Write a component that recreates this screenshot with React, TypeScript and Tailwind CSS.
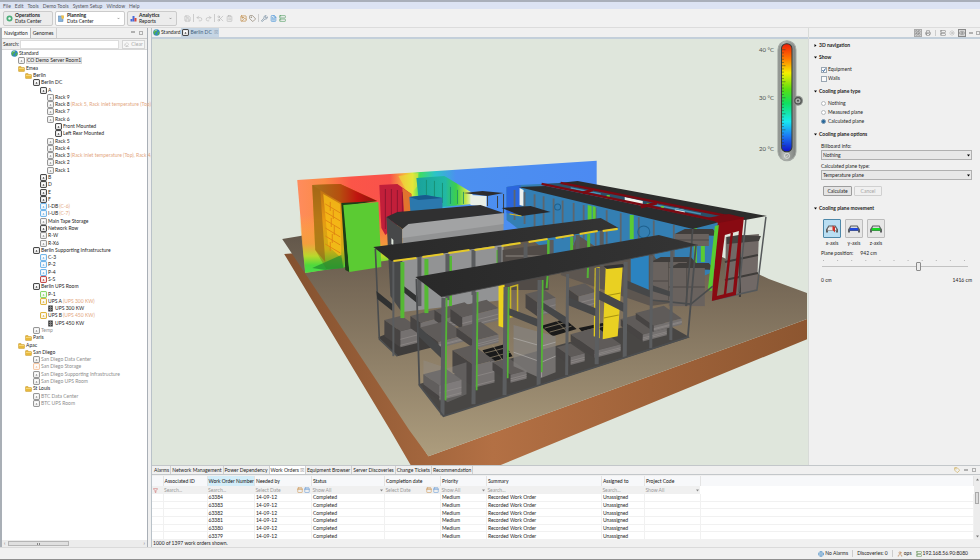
import React from "react";
import {
  Save, Undo2, Redo2, Scissors, ClipboardList, Image, Tag, Wrench, FileText, Server,
  ChevronDown, Globe, Printer, Sun, Eye, LayoutGrid, Eraser, User, Calendar, Filter,
} from "lucide-react";

type Row = { l: number; icon: string; text: string; note?: string; dim?: boolean; sel?: boolean };

const TREE: Row[] = [
  { l: 0, icon: "globe", text: "Standard" },
  { l: 1, icon: "rack", text: "CO Demo Server Room1", sel: true },
  { l: 1, icon: "folder", text: "Emea" },
  { l: 2, icon: "folder", text: "Berlin" },
  { l: 3, icon: "dark", text: "Berlin DC" },
  { l: 4, icon: "dark", text: "A" },
  { l: 5, icon: "rack", text: "Rack 9" },
  { l: 5, icon: "rack", text: "Rack 8", note: "(Rack 5, Rack inlet temperature (Top)," },
  { l: 5, icon: "rack", text: "Rack 7" },
  { l: 5, icon: "rack", text: "Rack 6" },
  { l: 6, icon: "dark", text: "Front Mounted" },
  { l: 6, icon: "dark", text: "Left Rear Mounted" },
  { l: 5, icon: "rack", text: "Rack 5" },
  { l: 5, icon: "rack", text: "Rack 4" },
  { l: 5, icon: "rack", text: "Rack 3", note: "(Rack inlet temperature (Top), Rack 4," },
  { l: 5, icon: "rack", text: "Rack 2" },
  { l: 5, icon: "rack", text: "Rack 1" },
  { l: 4, icon: "dark", text: "B" },
  { l: 4, icon: "dark", text: "D" },
  { l: 4, icon: "dark", text: "E" },
  { l: 4, icon: "dark", text: "F" },
  { l: 4, icon: "blue", text: "I-DB", note: "(C-6)" },
  { l: 4, icon: "blue", text: "I-UB", note: "(C-7)" },
  { l: 4, icon: "rack", text: "Main Tape Storage" },
  { l: 4, icon: "dark", text: "Network Row" },
  { l: 4, icon: "rack", text: "R-W" },
  { l: 4, icon: "rack", text: "R-X6" },
  { l: 3, icon: "dark", text: "Berlin Supporting Infrastructure" },
  { l: 4, icon: "blue", text: "C-3" },
  { l: 4, icon: "blue", text: "P-2" },
  { l: 4, icon: "blue", text: "P-4" },
  { l: 4, icon: "red", text: "S-S" },
  { l: 3, icon: "dark", text: "Berlin UPS Room" },
  { l: 4, icon: "green", text: "P-1" },
  { l: 4, icon: "yellow", text: "UPS A", note: "(UPS 300 KW)" },
  { l: 5, icon: "ups", text: "UPS 300 KW" },
  { l: 4, icon: "yellow", text: "UPS B", note: "(UPS 450 KW)" },
  { l: 5, icon: "ups", text: "UPS 450 KW" },
  { l: 3, icon: "rack", text: "Temp", dim: true },
  { l: 2, icon: "folder", text: "Paris" },
  { l: 1, icon: "folder", text: "Apac" },
  { l: 2, icon: "folder", text: "San Diego" },
  { l: 3, icon: "rack", text: "San Diego Data Center", dim: true },
  { l: 3, icon: "orange", text: "San Diego Storage", dim: true },
  { l: 3, icon: "rack", text: "San Diego Supporting Infrastructure", dim: true },
  { l: 3, icon: "rack", text: "San Diego UPS Room", dim: true },
  { l: 2, icon: "folder", text: "St Louis" },
  { l: 3, icon: "rack", text: "BTC Data Center", dim: true },
  { l: 3, icon: "rack", text: "BTC UPS Room", dim: true },
];

const INDENT = ["pl-[9px]", "pl-[16px]", "pl-[23px]", "pl-[31px]", "pl-[38px]", "pl-[45px]", "pl-[53px]"];

const BOX: Record<string, string> = {
  rack: "#858585", dark: "#2b2b2b", blue: "#5aaae6", red: "#b92a2a", green: "#74cf50", yellow: "#d9a61e", orange: "#f3bd95",
};

function GlobeIcon() {
  return (
    <svg viewBox="0 0 14 14" className="size-[7px] shrink-0">
      <circle cx="7" cy="7" r="6.5" fill="#3286c4" />
      <path d="M2 4 Q6 0 9 2 L7 6 L4 8 L5 12 Q1 11 1 7Z M9 7l4-2 q1 5-4 8z" fill="#52b04a" />
      <path d="M3 4 Q5 2 8 2" stroke="#d9f1ff" strokeWidth="1.2" fill="none" />
    </svg>
  );
}

function NodeIcon({ kind }: { kind: string }) {
  if (kind === "globe") return <GlobeIcon />;
  if (kind === "folder")
    return (
      <svg viewBox="0 0 14 14" className="size-[7px] shrink-0">
        <path d="M1 4q0-1 1-1h4l1 2h5q1 0 1 1v6q0 1-1 1H2q-1 0-1-1z" fill="#e8b93c" stroke="#bd8a1b" strokeWidth="0.8" />
        <path d="M2 7h10" stroke="#fbe08c" strokeWidth="1.5" />
      </svg>
    );
  if (kind === "ups")
    return (
      <svg viewBox="0 0 14 14" className="size-[7px] shrink-0">
        <rect x="2.5" y="1" width="9" height="12" fill="#3d3d3d" />
        <path d="M7 2v10M4 5h2M8 5h2M4 9h2M8 9h2" stroke="#c4c4c4" />
      </svg>
    );
  return (
    <svg viewBox="0 0 14 14" className="size-[7px] shrink-0">
      <rect x="1.2" y="1.2" width="11.6" height="11.6" rx="1" fill="#fdfdfd" stroke={BOX[kind]} strokeWidth="1.9" />
      <path d="M5 8.500h4M7 6v3" stroke={BOX[kind]} strokeWidth="1.2" />
    </svg>
  );
}

/* ---------- top ---------- */

function MenuBar() {
  const items = ["File", "Edit", "Tools", "Demo Tools", "System Setup", "Window", "Help"];
  return (
    <nav className="flex h-[9px] shrink-0 items-center gap-1 border-t-2 border-[#a9afba] bg-[#dce3f3] pl-[3px] text-[#55585f]">
      {items.map((m) => (
        <button key={m} className="h-[6px] leading-[6px]">{m}</button>
      ))}
    </nav>
  );
}

function Perspective({ title, sub, icon, cls, caret }: { title: string; sub: string; icon: React.ReactNode; cls: string; caret?: boolean }) {
  return (
    <button className={"flex h-[15px] items-center gap-[2px] rounded-[2px] border border-[#cbcbcb] pl-[2px] pr-1 text-left " + cls}>
      {icon}
      <span className="flex-1 leading-[6px]">
        <b className="block">{title}</b>
        <span className="block">{sub}</span>
      </span>
      {caret && <ChevronDown className="size-[3px] text-[#555]" strokeWidth={4} />}
    </button>
  );
}

function Toolbar() {
  const ic = "size-[7px]";
  return (
    <div className="flex h-[19px] shrink-0 items-center gap-[2px] border-b border-[#dcdcdc] bg-[#f1f1f1] pl-[3px]">
      <Perspective title="Operations" sub="Data Center" cls="w-[50px] bg-[#ececec]" icon={
        <svg viewBox="0 0 14 14" className="size-[7px]"><circle cx="7" cy="7" r="6" fill="#4cae79" /><circle cx="7" cy="7" r="2.5" fill="#eefbf3" /></svg>} />
      <Perspective title="Planning" sub="Data Center" caret cls="w-[70px] bg-white" icon={
        <svg viewBox="0 0 14 14" className="size-[7px]"><rect x="1" y="2" width="9" height="11" fill="#88b3dc" stroke="#4f7fab" /><path d="M6 1h6v5L8 9z" fill="#f2c14b" /></svg>} />
      <Perspective title="Analytics" sub="Reports" caret cls="w-[50px] bg-[#ececec]" icon={
        <svg viewBox="0 0 14 14" className="size-[7px]"><path d="M1 8h4v5H1z" fill="#4668d8" /><path d="M5 2h4v11H5z" fill="#4668d8" /><path d="M9 6h4v7H9z" fill="#d8483c" /></svg>} />
      <div className="ml-[5px] flex items-center gap-[2px] text-[#b5b5b5]">
        <Save className={ic} />
        <i className="h-2 w-px bg-[#ccc]" />
        <Undo2 className={ic} /><Redo2 className={ic} />
        <i className="h-2 w-px bg-[#ccc]" />
        <Scissors className={ic} /><ClipboardList className={ic} />
        <i className="h-2 w-[3px]" />
        <Image className={ic + " text-[#b97a2a]"} /><Tag className={ic + " text-[#7b6a55]"} />
        <i className="h-2 w-px bg-[#ccc]" />
        <Wrench className={ic + " text-[#5c7890]"} /><FileText className={ic + " text-[#2f86d6]"} /><Server className={ic + " text-[#4a9a5c]"} />
      </div>
    </div>
  );
}

function WinButtons() {
  return (
    <span className="ml-auto flex items-start gap-1 pr-1">
      <i className="h-[2px] w-1 border border-[#b0b0b0]" />
      <i className="size-1 border border-[#b0b0b0]" />
    </span>
  );
}

/* ---------- left ---------- */

function Navigation() {
  return (
    <aside className="flex w-[148px] shrink-0 flex-col border-l-2 border-r border-[#a9afb6] bg-white">
      <div className="flex h-[10px] shrink-0 items-center bg-[#f0f0f0]">
        <button className="h-full border-r border-[#b9b9b9] bg-[#fafafa] px-[2px]">Navigation</button>
        <button className="h-full border-r border-[#cfcfcf] px-[2px]">Genomes</button>
        <WinButtons />
      </div>
      <div className="flex h-[11px] shrink-0 items-center gap-px border-t border-[#c9c9c9] bg-[#f0f0f0] pl-px pr-[2px]">
        <label htmlFor="search">Search:</label>
        <input id="search" className="h-[9px] min-w-0 flex-1 border border-[#dcdcdc] bg-white px-[2px]" />
        <button className="ml-[2px] flex h-[9px] w-[23px] items-center justify-center gap-[2px] border border-[#d5d5d5] bg-[#f7f7f7] text-[#a9a9a9]">
          <Eraser className="size-[5px]" />Clear
        </button>
      </div>
      <ul className="grid h-[358px] shrink-0 auto-rows-fr border-t border-[#d8d8d8]">
        {TREE.map((r, i) => (
          <li key={i} className={"flex items-center gap-px whitespace-nowrap leading-[7px] " + INDENT[r.l]}>
            <NodeIcon kind={r.icon} />
            <span className={r.dim ? "text-[#8d8d8d]" : r.sel ? "border border-[#d6d6d6] bg-[#ececec] leading-[5px]" : ""}>{r.text}</span>
            {r.note && <span className="text-[#e3a680]">{r.note}</span>}
          </li>
        ))}
      </ul>
      <div className="flex-1" />
      <div className="flex h-[7px] shrink-0 items-center gap-[3px] bg-[#ececec] px-[2px] text-[#666]">
        <span>‹</span>
        <span className="flex h-[5px] w-[61px] items-center justify-center gap-px border border-[#b5b5b5] bg-[#e0e0e0]">
          <i className="h-[2px] w-px bg-[#888]" /><i className="h-[2px] w-px bg-[#888]" />
        </span>
        <span className="ml-auto">›</span>
      </div>
    </aside>
  );
}

/* ---------- 3D scene ---------- */

const FRONT_POSTS = [
  [443, 298, 415, 4], [474, 292, 404, 4], [505, 287, 395, 4], [539, 280, 385, 4], [567, 274, 375, 3],
  [597, 268, 364, 4], [625, 262, 357, 4], [651, 256, 348, 3], [671, 251, 340, 3],
];
const MID_POSTS = [[393, 261, 356, 2], [419, 257, 306, 4], [447, 254, 300, 4], [473, 250, 295, 4], [499, 247, 280, 4], [525, 243, 276, 4], [551, 240, 272, 4], [577, 235, 270, 4], [601, 230, 266, 4]];
const MID_GREENS = [[402, 262, 318, 4], [426, 259, 313, 4], [450, 256, 306, 3], [498, 250, 263, 4], [548, 240, 255, 3], [571, 237, 252, 3], [588, 234, 250, 3]];
const YELLOW_RAILS = [
  [393, 261, 416, 258], [422, 257, 443, 254], [448, 253, 469, 250], [474, 250, 494, 247], [501, 246, 520, 243],
  [528, 242, 547, 239], [555, 238, 573, 235], [579, 234, 597, 231], [602, 231, 617, 229],
];
/* x, y, width, depth, height of low equipment stacks */
const STACKS = [
  [384, 320, 17, 16, 16], [410, 316, 24, 10, 12], [434, 310, 30, 12, 10], [450, 309, 36, 12, 12],
  [418, 328, 28, 20, 6], [456, 328, 24, 18, 8], [452, 350, 20, 22, 22], [423, 374, 22, 16, 15], [492, 362, 16, 18, 8],
  [556, 347, 14, 14, 8], [570, 334, 26, 24, 7], [620, 319, 24, 22, 7], [635, 313, 28, 18, 6], [525, 294, 18, 12, 14], [566, 288, 18, 12, 13],
];

function Stack({ s }: { s: number[] }) {
  const [x, y, w, d, h] = s;
  const ax = x + d, ay = y + d * 0.7;
  const bx = ax + w, by = ay - w * 0.26;
  return (
    <g>
      <path d={`M${x} ${y}L${x + w} ${y - w * 0.26}L${bx} ${by}L${ax} ${ay}Z`} fill="#5f5b59" />
      <path d={`M${x} ${y}L${ax} ${ay}V${ay + h}L${x} ${y + h}Z`} fill="#474443" />
      <path d={`M${ax} ${ay}L${bx} ${by}V${by + h}L${ax} ${ay + h}Z`} fill="#757170" />
      <path d={`M${ax} ${ay + h / 2}L${bx} ${by + h / 2}M${ax} ${ay + h - 2}L${bx} ${by + h - 2}`} stroke="#96918e" strokeWidth="0.6" />
    </g>
  );
}

function Scene() {
  return (
    <svg viewBox="152 39 655 426" preserveAspectRatio="xMidYMid slice" className="absolute inset-0 size-full" role="img" aria-label="Berlin DC 3D view">
      <defs>
        <linearGradient id="floor" x1="0" y1="200" x2="0" y2="450" gradientUnits="userSpaceOnUse">
          <stop offset="0" stopColor="#554b42" /><stop offset="0.35" stopColor="#776957" /><stop offset="1" stopColor="#ab9b7c" />
        </linearGradient>
        <linearGradient id="rim" x1="284" y1="0" x2="806" y2="0" gradientUnits="userSpaceOnUse">
          <stop offset="0" stopColor="#83512f" /><stop offset="0.4" stopColor="#b37044" /><stop offset="1" stopColor="#8d5630" />
        </linearGradient>
        <linearGradient id="heat" x1="297" y1="0" x2="596" y2="0" gradientUnits="userSpaceOnUse">
          <stop offset="0" stopColor="#ff8c5e" /><stop offset="0.09" stopColor="#fb8a45" /><stop offset="0.18" stopColor="#fb5548" />
          <stop offset="0.31" stopColor="#f9524b" /><stop offset="0.36" stopColor="#f6b93c" /><stop offset="0.385" stopColor="#d9ec38" />
          <stop offset="0.41" stopColor="#3fdc63" /><stop offset="0.46" stopColor="#2cc5c6" /><stop offset="0.53" stopColor="#4c90f0" /><stop offset="1" stopColor="#4c8af2" />
        </linearGradient>
        <linearGradient id="cool" x1="0" y1="215" x2="0" y2="272" gradientUnits="userSpaceOnUse">
          <stop offset="0" stopColor="#ffb030" stopOpacity="0" /><stop offset="0.5" stopColor="#f2a13a" stopOpacity="0.85" />
          <stop offset="0.72" stopColor="#b9d92c" /><stop offset="0.88" stopColor="#4fd93c" /><stop offset="1" stopColor="#48dd4a" />
        </linearGradient>
        <linearGradient id="hotrack" x1="0" y1="186" x2="0" y2="270" gradientUnits="userSpaceOnUse">
          <stop offset="0" stopColor="#b96b13" /><stop offset="0.4" stopColor="#e89a12" /><stop offset="0.75" stopColor="#cfae16" /><stop offset="1" stopColor="#3fae2e" />
        </linearGradient>
        <linearGradient id="hottop" x1="315" y1="0" x2="375" y2="0" gradientUnits="userSpaceOnUse">
          <stop offset="0" stopColor="#a8701c" /><stop offset="0.4" stopColor="#b5500f" /><stop offset="0.7" stopColor="#c0140f" /><stop offset="1" stopColor="#8f120e" />
        </linearGradient>
        <linearGradient id="teal" x1="418" y1="0" x2="472" y2="0" gradientUnits="userSpaceOnUse">
          <stop offset="0" stopColor="#1aa39c" /><stop offset="0.5" stopColor="#22b8a4" /><stop offset="0.7" stopColor="#3ed04a" /><stop offset="0.88" stopColor="#c6e64a" /><stop offset="1" stopColor="#e9f2e9" />
        </linearGradient>
        <linearGradient id="roof" x1="0" y1="0" x2="1" y2="0"><stop offset="0" stopColor="#292929" /><stop offset="1" stopColor="#343434" /></linearGradient>
        <linearGradient id="scale" x1="0" y1="0" x2="0" y2="1">
          <stop offset="0" stopColor="#f01c08" /><stop offset="0.14" stopColor="#ff7a00" /><stop offset="0.27" stopColor="#f6f000" />
          <stop offset="0.42" stopColor="#5be010" /><stop offset="0.55" stopColor="#0fe060" /><stop offset="0.72" stopColor="#18e8f0" />
          <stop offset="0.85" stopColor="#1c7cf4" /><stop offset="1" stopColor="#1010c8" />
        </linearGradient>
        <linearGradient id="tube" x1="0" y1="0" x2="1" y2="0"><stop offset="0" stopColor="#858985" /><stop offset="0.3" stopColor="#b4b8b4" /><stop offset="1" stopColor="#7e827e" /></linearGradient>
      </defs>

      <rect x="-300" y="-200" width="1600" height="900" fill="#dfe6dc" />
      <path d="M284 254L297 253L428 456L806 319V339L497 466H411L390 430Z" fill="url(#rim)" />
      <path d="M282 239L300 236L480 190L600 200L768 279L806 293V319L428 456L409 430L370 371L336 320L292 254Z" fill="url(#floor)" />

      {/* temperature plane */}
      <path d="M297 180L596 161V215L500 240L305 273Z" fill="url(#heat)" />
      <path d="M299 215L410 205V257L305 273Z" fill="url(#cool)" />
      <path d="M398 176L418 173L417 186L409 196Z" fill="#e9e33a" opacity="0.6" />
      <path d="M312 185L340 184L377 201L343 205L344 268L326 269L315 250Z" fill="url(#hotrack)" />
      <path d="M312 185L340 184L377 201L343 204L326 194Z" fill="url(#hottop)" />
      <path d="M312 185L320 190L325 262L315 250Z" fill="#9a6518" opacity="0.65" />
      <path d="M323 194L340 204L341 258L328 246Z" fill="#f7bd18" opacity="0.8" />
      {[210, 218, 226, 234, 242, 250].map((y) => <path key={y} d={`M325 ${y - 6}L340 ${y + 3}M${330 + (y % 5)} ${y - 8}v9`} stroke="#df8212" strokeWidth="0.9" />)}
      <path d="M312 268L341 255L343 268L325 270Z" fill="#218a30" opacity="0.7" />
      <path d="M341 203L377 201L344 206L349 272L345 270Z" fill="#1d3e18" />
      <path d="M343 205L378 202L381 267L349 272Z" fill="#5bcb33" />
      <path d="M379 185L397 184L411 194L411 212L385 235L381 228Z" fill="#c21f3a" />
      <path d="M385 189v40M391 189v34M397 190v28M402 192v22" stroke="#8f1630" strokeWidth="1" />
      <path d="M402 188L411 194V212L404 216Z" fill="#e98a2c" opacity="0.8" />
      <path d="M416 178L444 176L472 193V204L440 207L418 197Z" fill="url(#teal)" />
      <path d="M426 180v18M434 181v20M442 183v20M450 187v17M457 190v14M463 192v12" stroke="#178a6c" strokeWidth="0.8" />
      <path d="M409 197L425 195L442 198V212H410Z" fill="#2b78ad" />
      <path d="M409 197L425 195L442 198L418 200Z" fill="#175b8d" />
      <path d="M470 195L486 196V207L470 205Z" fill="#e8eee6" />
      <path d="M503 194V214M497 196v12M487 196v10" stroke="#3c4046" />
      <path d="M463 193L482 191L503 193L487 196Z" fill="#2c2c2e" />

      {/* air handler */}
      <path d="M386 217L402 229V313L390 296Z" fill="#474849" />
      <path d="M402 229L408 223L503 213V300L402 312Z" fill="#929394" />
      <path d="M402 229L408 223L503 213V224L402 238Z" fill="#a2a3a4" />
      <path d="M386 217L397 212L480 205L503 213L408 224L402 229Z" fill="#303031" />
      <path d="M391 238l2 2v6l-2-2z" fill="#dfe6dc" />

      {/* rear aisle with containment */}
      <path d="M506 187L518 185L560 183L720 224L716 270L650 300L560 262L506 220Z" fill="#347fb3" />
      <path d="M506 187L520 185V215L506 213Z" fill="#2b66dd" />
      <path d="M519 188L523 190V206L519 205Z" fill="#edf2ee" />
      {[514, 524, 534, 543, 553, 562, 573, 583, 595, 606, 620, 638, 653, 673, 690].map((x) => (
        <path key={x} d={`M${x} ${190 + (x - 514) * 0.22}v${30 + (x - 514) * 0.18}`} stroke="#5d666d" strokeWidth="1.8" />
      ))}
      <circle cx="643" cy="232" r="6" fill="none" stroke="#1e618f" />
      <circle cx="557" cy="207" r="3" fill="none" stroke="#1e618f" />
      <path d="M587 205l4 1v14h-4zM592 206l3 1v14h-3zM629 215h4v24h-4zM693 228h3v45h-3zM700 232h4v30h-4z" fill="#5bcb33" />
      <path d="M501 208L530 206L550 212L521 216Z" fill="#29292a" /><path d="M509 214L521 216" stroke="#d8b928" fill="none" />
      <path d="M577 235L600 250H648L690 300L650 306L560 275Z" fill="#5d5650" />
      <path d="M630 255L648 250V292L630 288Z" fill="#2b83c0" />
      {[[650, 262, 36, 38], [668, 268, 36, 38], [674, 234, 34, 12]].map(([x, y, w, h]) => (
        <g key={x}>
          <path d={`M${x} ${y}l10-5h${w - 6}l6 7z`} fill="#403d3b" />
          <rect x={x} y={y} width={w} height={h} fill="#69625e" />
          <path d={`M${x + w / 2} ${y}v${h}M${x} ${y + h / 2}h${w}`} stroke="#4c4744" />
        </g>
      ))}
      <path d="M725 237L758 234L756 289L724 299Z" fill="#716966" />
      <path d="M726 237L738 235L760 236L758 241L726 244Z" fill="#43403e" />
      <path d="M739 238V297M724 262L757 255M724 280L757 273" stroke="#3f3c3a" strokeWidth="2" />
      <path d="M765 217L756 290L712 300M745 219L738 292" stroke="#55585a" strokeWidth="1.5" fill="none" />
      <path d="M542 184L577 182L745 219L719 223Z" fill="#2a5068" />
      <path d="M624 197l18 4v5l-18-4zM674 208l10 2v4l-10-2z" fill="#f0f2ec" />
      <path d="M570 188l30 6M600 197l24 5M650 204l50 10" stroke="#4c93b5" strokeWidth="1.5" />
      <path d="M606 195h3v4h-3zM646 203h3v4h-3zM660 206h3v4h-3z" fill="#62c83c" />
      <path d="M558 183L577 181L766 216L744 220Z" fill="#2c2c2b" />
      <path d="M518 187L545 186L719 222L692 229Z" fill="#2b2c2d" />
      <path d="M541 184L719 221L741 219L560 183" stroke="#7a0a12" strokeWidth="2.4" strokeLinejoin="bevel" fill="none" />
      <path d="M592 190L582 193M656 203L640 207" stroke="#7a0a12" strokeWidth="3" />
      <path d="M717 221L743 217L735 295L711 301Z M724 235L716 296L732 292L738 231Z" fill="#890a12" fillRule="evenodd" />
      <path d="M706 218L728 214L744 218L718 223Z" fill="#7a0a12" />
      <path d="M731 233L724 295" stroke="#890a12" strokeWidth="2.4" />
      <path d="M714 226L718 225L711 291L707 290Z" fill="#58cc31" />
      <path d="M692 229L685 306M650 300L690 304L712 286" stroke="#4a4c4d" strokeWidth="1.6" fill="none" />

      {/* middle row */}
      <path d="M502 250L548 244V290H502Z" fill="#514b47" />
      <path d="M505 256h38M505 263h38M505 270h38" stroke="#8c8580" />
      <path d="M378 337L397 356L440 345L420 320Z" fill="#3e3c3b" />
      {STACKS.slice(0, 4).map((s, i) => <Stack key={i} s={s} />)}
      <path d="M375 249L379 339L397 356" stroke="#4b4d4e" strokeWidth="1.6" fill="none" />
      <path d="M376 291L392 304V311L377 299ZM402 285L419 298V305L403 292Z" fill="#303131" />
      {MID_GREENS.map(([x, a, b, w]) => <path key={x} d={`M${x} ${a}V${b}`} stroke="#55b934" strokeWidth={w} />)}
      {MID_POSTS.map(([x, a, b, w]) => <path key={x} d={`M${x} ${a}V${b}`} stroke="#5a5c5e" strokeWidth={w} />)}
      <path d="M373 247L600 218L618 228L391 261Z" fill="url(#roof)" />
      {YELLOW_RAILS.map(([a, b, c, d]) => <path key={a} d={`M${a} ${b}L${c} ${d}`} stroke="#e6c928" strokeWidth="2.2" />)}

      {/* front row */}
      <path d="M418 384L443 416L689 337L655 318Z" fill="#484644" />
      <path d="M482 350l22-6 8 12-22 6zM540 326l24-7 12 10-24 7zM578 328l24-5 10 9-24 7z" fill="#1a1a1a" />
      <path d="M484 353l24-6M488 358l22-6M492 345l10 15M544 328l22-6M549 332l22-6M556 321l12 12M583 331l20-5" stroke="#9c8e74" strokeWidth="0.7" />
      <path d="M498 284L504 282V328L498 326Z" fill="#ecd21e" /><path d="M510 287l7-2v30l-7 2z" fill="none" stroke="#c9b426" strokeWidth="1.5" />
      {STACKS.slice(4).map((s, i) => <Stack key={i} s={s} />)}
      <path d="M513 325L555 336V372L540 378L513 366Z" fill="#858280" opacity="0.72" />
      <path d="M513 338L541 346L555 342M513 352L541 362L555 356M541 346V377" stroke="#b0adab" strokeWidth="0.7" fill="none" />
      <path d="M423 360L447 368L466 362V394L447 402L423 384Z" fill="#929090" opacity="0.35" />
      <path d="M594 268L599 267V338L593 336Z" fill="#e3cb1c" />
      <path d="M605 268L622 266L617 336L602 339Z" fill="#e9d022" />
      <path d="M604 296L620 293M603 318L618 315" stroke="#a99410" />
      <path d="M603 266L622 264L626 267L606 269Z" fill="#333" />
      <path d="M418 326L443 349V360L418 336ZM508 308L540 320V328L508 315ZM540 301L567 318V326L540 308ZM567 297L597 309V317L567 305ZM597 290L625 304V313L597 299ZM625 280L651 291V298L625 288ZM651 285L671 292V297L651 291Z" fill="#464748" />
      {[[446, 298, 400], [477, 292, 390], [508, 287, 378], [542, 280, 372], [588, 250, 278], [547, 276, 288]].map(([x, a, b]) => (
        <path key={x} d={`M${x} ${a}L${x - 1} ${b}`} stroke="#54b336" strokeWidth="2" />
      ))}
      {FRONT_POSTS.map(([x, a, b, w]) => <path key={x} d={`M${x} ${a}L${x - 1} ${b}`} stroke="#5c5e60" strokeWidth={w} />)}
      <path d="M416 279L419 385L443 416L687 337L695 246" stroke="#4c4e50" strokeWidth="1.8" fill="none" />
      <path d="M415 277L658 235L697 245L441 297Z" fill="url(#roof)" />
      <path d="M441 297L697 245" stroke="#4a4a4a" strokeWidth="0.8" />

      {/* temperature scale */}
      <rect x="777" y="41" width="18" height="120" rx="9" fill="url(#tube)" stroke="#a3a8a3" />
      <rect x="780.5" y="44" width="10.5" height="108" rx="5" fill="url(#scale)" stroke="#333b36" />
      {Array.from({ length: 31 }, (_, i) => <path key={i} d={`M781 ${50 + i * 3.2}h${i % 5 ? 2 : 3.5}`} stroke="#33442f" strokeWidth="0.5" />)}
      <circle cx="797" cy="101" r="5" fill="#8a8e8a" />
      <circle cx="797" cy="101" r="3.2" fill="#a9ada9" stroke="#4d504d" strokeWidth="1.2" />
      <circle cx="797" cy="101" r="1" fill="#4d504d" />
      <circle cx="786" cy="156" r="2.6" fill="none" stroke="#e2e5e2" strokeWidth="0.8" />
      <path d="M784.500 156l1 1 2-2" stroke="#e2e5e2" strokeWidth="0.8" fill="none" />
      <g fontSize="6" fill="#4c514c" textAnchor="end">
        <text x="773" y="52">40 °C</text><text x="773" y="100">30 °C</text><text x="773" y="151">20 °C</text>
      </g>
    </svg>
  );
}

/* ---------- right ---------- */

function Heading({ children, open = true }: { children: string; open?: boolean }) {
  return (
    <h2 className="flex h-2 items-center gap-[2px] font-bold text-[#222]">
      <svg viewBox="0 0 6 6" className="size-[3px]">{open ? <path d="M0 1h6L3 5z" /> : <path d="M1 0v6l4-3z" />}</svg>
      {children}
    </h2>
  );
}

function Check({ label, checked }: { label: string; checked?: boolean }) {
  return (
    <label className="flex h-[9px] items-center gap-px">
      <span className="relative flex">
        <input type="checkbox" defaultChecked={checked} className="size-[6px] appearance-none border border-[#9aa6b2] bg-[#fafafa]" />
        {checked && <svg viewBox="0 0 6 6" className="pointer-events-none absolute inset-0 size-[6px]"><path d="M1.500 3l1 1.500 2-3" stroke="#2f5f96" fill="none" /></svg>}
      </span>
      {label}
    </label>
  );
}

function Radio({ label, checked }: { label: string; checked?: boolean }) {
  return (
    <label className="flex h-[9px] items-center gap-[2px]">
      <input type="radio" name="plane" defaultChecked={checked} className="size-[5px] appearance-none rounded-full border border-[#b4b8bc] bg-white checked:border-[#7f9bb3] checked:bg-[#27689b]" />
      {label}
    </label>
  );
}

function Select({ id, label, value }: { id: string; label: string; value: string }) {
  return (
    <div>
      <label htmlFor={id} className="block h-[7px] leading-[7px]">{label}</label>
      <div className="relative">
        <select id={id} className="block h-[10px] w-full appearance-none border border-[#b0b0b0] bg-[#e8e8e8] px-px leading-[8px]">
          <option>{value}</option>
        </select>
        <svg viewBox="0 0 6 6" className="pointer-events-none absolute right-[2px] top-[4px] size-[3px]"><path d="M0 1h6L3 5z" /></svg>
      </div>
    </div>
  );
}

function AxisButton({ label, color, active }: { label: string; color: string; active?: boolean }) {
  return (
    <div className="flex w-[18px] flex-col items-center gap-[2px]">
      <button aria-label={label} className={"flex h-[19px] w-full items-center justify-center rounded-[1px] border " + (active ? "border-[#4d87a8] bg-[#b9def2]" : "border-[#bcbcbc] bg-[#e6e6e6]")}>
        <svg viewBox="0 0 28 20" className="h-[10px] w-[14px]">
          <path d="M2 17V11L7 3H21L26 11V17H22V14H6V17Z" fill="#5c5e60" />
          <path d="M8 5H20L21 8H7Z" fill="#d9dbdc" />
          <path d="M6 8H22L23 13H5Z" fill={active ? "#e8e8e8" : color} />
          {active && <path d="M15 3L20 6V17L15 12Z" fill={color} />}
        </svg>
      </button>
      <span className="h-[7px] leading-[7px]">{label}</span>
    </div>
  );
}

function Properties() {
  return (
    <aside className="flex w-[172px] shrink-0 flex-col border-l border-[#d8dbd8] bg-[#f0f0f0]">
      <div className="flex h-[11px] shrink-0 items-center justify-end gap-[3px] border-b-2 border-[#c3cfda] text-[#777]">
        <LayoutGrid className="size-[8px] border border-[#aaa] bg-[#ddd]" />
        <Printer className="size-[6px]" />
        <i className="mx-px h-[6px] w-px bg-[#ccc]" />
        <Server className="size-[6px]" /><Sun className="size-[6px] text-[#aaa]" />
        <Eye className="size-[8px] border border-[#888] bg-[#d5d5d5]" />
        <i className="h-[2px] w-1 border border-[#b0b0b0]" /><i className="size-1 border border-[#b0b0b0]" />
      </div>
      <div className="flex flex-col pl-[5px] pr-2 pt-[2px]">
        <Heading open={false}>3D navigation</Heading>
        <div className="h-1" />
        <Heading>Show</Heading>
        <div className="flex flex-col pb-1 pl-[7px] pt-1">
          <Check label="Equipment" checked /><Check label="Walls" />
        </div>
        <Heading>Cooling plane type</Heading>
        <div className="flex flex-col pb-1 pl-[7px] pt-1">
          <Radio label="Nothing" /><Radio label="Measured plane" /><Radio label="Calculated plane" checked />
        </div>
        <Heading>Cooling plane options</Heading>
        <div className="flex flex-col gap-[3px] pl-[7px] pt-[5px]">
          <Select id="billboard" label="Billboard info:" value="Nothing" />
          <Select id="ctype" label="Calculated plane type:" value="Temperature plane" />
        </div>
        <div className="flex gap-[2px] pb-2 pl-[9px] pt-[6px]">
          <button className="h-[10px] w-[29px] rounded-[1px] border border-[#9d9d9d] bg-[#e5e5e5] leading-[8px]">Calculate</button>
          <button disabled className="h-[10px] w-[28px] rounded-[1px] border border-[#d0d0d0] leading-[8px] text-[#a5a5a5]">Cancel</button>
        </div>
        <Heading>Cooling plane movement</Heading>
        <div className="flex gap-1 pl-[9px] pt-[7px]">
          <AxisButton label="x-axis" color="#cf3127" active />
          <AxisButton label="y-axis" color="#2148dc" />
          <AxisButton label="z-axis" color="#17d724" />
        </div>
        <div className="flex gap-[7px] pl-[7px] pt-[3px] leading-[7px]">
          <label htmlFor="pos">Plane position:</label><span>942 cm</span>
        </div>
        <div className="pl-2 pr-1 pt-[3px]">
          <svg className="block h-px w-full" preserveAspectRatio="none" viewBox="0 0 145 1"><path d="M1 0.500H145" stroke="#b5b5b5" strokeDasharray="1 13" /></svg>
          <input id="pos" type="range" min="0" max="1416" defaultValue="942" className="block h-[11px] w-full appearance-none bg-transparent [&::-webkit-slider-runnable-track]:h-px [&::-webkit-slider-runnable-track]:bg-[#c2c2c2] [&::-webkit-slider-thumb]:-mt-1 [&::-webkit-slider-thumb]:h-[9px] [&::-webkit-slider-thumb]:w-[5px] [&::-webkit-slider-thumb]:appearance-none [&::-webkit-slider-thumb]:rounded-[1px] [&::-webkit-slider-thumb]:border [&::-webkit-slider-thumb]:border-[#8b8b8b] [&::-webkit-slider-thumb]:bg-[#ececec]" />
        </div>
        <div className="flex justify-between pl-[7px] pt-[5px] leading-[7px]"><span>0 cm</span><span>1416 cm</span></div>
      </div>
    </aside>
  );
}

/* ---------- bottom ---------- */

const TABS = ["Alarms", "Network Management", "Power Dependency", "Work Orders", "Equipment Browser", "Server Discoveries", "Change Tickets", "Recommendation"];
const COLS: { h: string; f: string; w: string; k: string }[] = [
  { h: "", f: "", w: "w-[11px]", k: "" },
  { h: "Associated ID", f: "Search...", w: "w-[44px]", k: "" },
  { h: "Work Order Number", f: "Search...", w: "w-[46px]", k: "num" },
  { h: "Needed by", f: "Select Date", w: "w-[57px]", k: "date" },
  { h: "Status", f: "Show All", w: "w-[73px]", k: "status" },
  { h: "Completion date", f: "Select Date", w: "w-[56px]", k: "" },
  { h: "Priority", f: "Show All", w: "w-[46px]", k: "prio" },
  { h: "Summary", f: "Search...", w: "w-[115px]", k: "sum" },
  { h: "Assigned to", f: "Search...", w: "w-[43px]", k: "asg" },
  { h: "Project Code", f: "Show All", w: "w-[56px]", k: "" },
  { h: "", f: "", w: "w-auto", k: "" },
];
const NUMS = ["63384", "63383", "63382", "63381", "63380", "63379"];
const VALUES: Record<string, string> = { date: "14-09-12", status: "Completed", prio: "Medium", sum: "Recorded Work Order", asg: "Unassigned" };

function WorkOrders() {
  return (
    <section className="flex shrink-0 flex-col bg-[#f0f0f0]">
      <div className="flex h-[10px] items-center border-b border-t border-[#c3c7ca] pl-px">
        {TABS.map((t) => (
          <button key={t} className={"flex h-full items-center gap-px border-r border-[#cfcfcf] px-px " + (t === "Work Orders" ? "bg-white" : "")}>
            {t}{t === "Work Orders" && <span className="text-[#999]">☒</span>}
          </button>
        ))}
        <span className="ml-auto flex items-center gap-1 pr-1"><Tag className="size-[6px] text-[#c79a2d]" /><i className="h-[2px] w-1 border border-[#b0b0b0]" /><i className="size-1 border border-[#b0b0b0]" /></span>
      </div>
      <div className="mt-px flex">
        <table className="h-[64px] min-w-0 flex-1 table-fixed border-collapse bg-white text-left">
          <thead>
            <tr className="h-[10px] bg-[#f7f8fa]">
              {COLS.map((c, i) => (
                <th key={i} className={"whitespace-nowrap border-r border-[#e4e4e4] p-0 pl-px font-normal text-[#111] " + c.w + (c.k === "num" ? " bg-[#d3edf9]" : "")}>{c.h}</th>
              ))}
            </tr>
            <tr className="h-2 text-[#9a9a9a]">
              {COLS.map((c, i) => (
                <td key={i} className={"p-0 pl-px " + (i < 10 ? "bg-[#f0f0f0]" : "")}>
                  <span className="flex items-center justify-between pr-px leading-[7px]">
                    {i === 0 ? <Filter className="size-[5px] text-[#c23a3a]" /> : c.f}
                    {c.f === "Select Date" && <span className="flex gap-px"><Calendar className="size-[6px] text-[#c98d42]" /><Calendar className="size-[6px] text-[#5b93d3]" /></span>}
                    {c.f === "Show All" && <svg viewBox="0 0 6 6" className="size-[3px]"><path d="M0 1h6L3 5z" fill="#888" /></svg>}
                  </span>
                </td>
              ))}
            </tr>
          </thead>
          <tbody>
            {NUMS.map((n) => (
              <tr key={n}>
                {COLS.map((c, i) => (
                  <td key={i} className="whitespace-nowrap border-b border-r border-[#f1f1f1] p-0 pl-px leading-[6px]">{c.k === "num" ? n : VALUES[c.k] ?? ""}</td>
                ))}
              </tr>
            ))}
          </tbody>
        </table>
        <div className="flex w-[6px] flex-col items-center justify-between bg-[#ececec]">
          <svg viewBox="0 0 6 6" className="mt-[2px] size-[3px]"><path d="M0 5h6L3 1z" fill="#777" /></svg>
          <i className="mb-5 h-3 w-1 border border-[#aaa] bg-[#ddd]" />
          <svg viewBox="0 0 6 6" className="mb-[2px] size-[3px]"><path d="M0 1h6L3 5z" fill="#777" /></svg>
        </div>
      </div>
      <p className="h-[7px] pl-px leading-[7px]">1000 of 1397 work orders shown.</p>
    </section>
  );
}

function StatusBar() {
  return (
    <footer className="flex h-[13px] shrink-0 items-center justify-end gap-1 border-b border-t border-b-[#8e8e8e] border-t-[#dadada] bg-[#f0f0f0] pr-3">
      <span className="flex items-center gap-px"><Globe className="size-[6px] text-[#3a84c4]" />No Alarms</span>
      <i className="h-[7px] w-px bg-[#ccc]" />
      <span>Discoveries: 0</span>
      <i className="h-[7px] w-px bg-[#ccc]" />
      <span className="flex items-center gap-px"><User className="size-[6px] text-[#b06a2c]" />ops</span>
      <span className="flex items-center gap-px"><Server className="size-[6px] text-[#5d8a4a]" />192.168.56.90:8080</span>
    </footer>
  );
}

export default function App() {
  return (
    <div className="flex h-screen flex-col overflow-hidden bg-[#f0f0f0] font-['Lato','Liberation_Sans',sans-serif] text-[5px] leading-[7px] text-[#1e1e1e]">
      <MenuBar />
      <Toolbar />
      <div className="flex min-h-0 flex-1">
        <Navigation />
        <div className="ml-[3px] flex min-w-0 flex-1 flex-col border-l border-[#b9c2c9]">
          <div className="flex min-h-0 flex-1">
            <main className="flex min-w-0 flex-1 flex-col">
              <div className="flex h-[11px] shrink-0 items-center border-b-2 border-[#c3cfda]">
                <button className="flex items-center gap-px px-px"><GlobeIcon />Standard</button>
                <button className="flex h-full items-center gap-px bg-[#c5d5e4] px-px text-[#42627f]"><NodeIcon kind="dark" />Berlin DC<span className="pl-px text-[#8fa3b5]">☒</span></button>
              </div>
              <div className="relative min-h-0 flex-1 overflow-hidden"><Scene /></div>
            </main>
            <Properties />
          </div>
          <WorkOrders />
        </div>
      </div>
      <StatusBar />
    </div>
  );
}
